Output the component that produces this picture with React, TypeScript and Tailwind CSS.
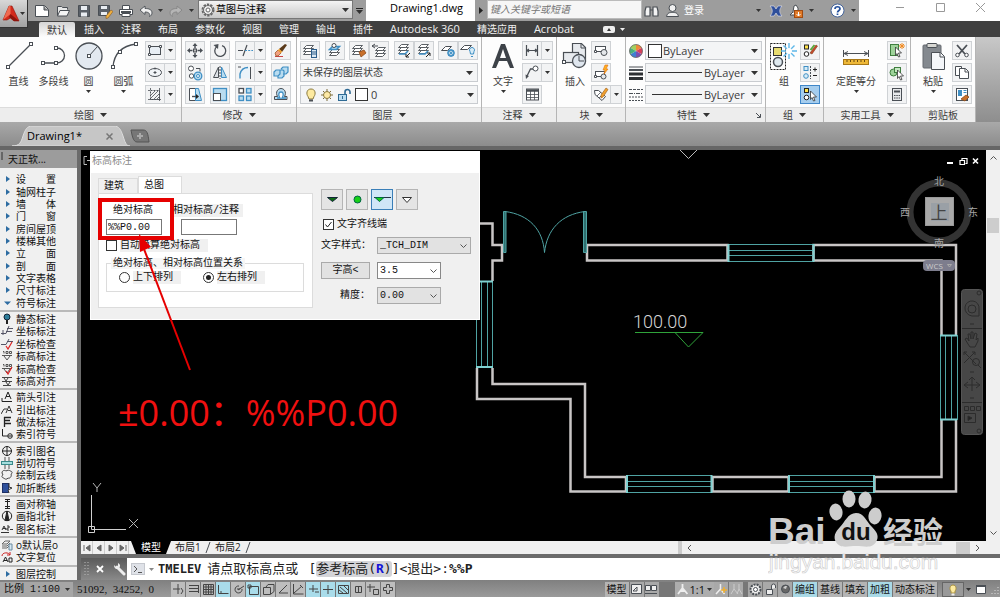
import { clsx } from 'clsx';
import type { ReactNode } from 'react';

const INK = '#4a4f55';
const BLUE = '#3f8fc4';
const PALE = '#b9dcf0';

function Svg({ w, h, className, children }: { w: number; h: number; className?: string; children: ReactNode }) {
    return (
        <svg
            width={w}
            height={h}
            viewBox={`0 0 ${w} ${h}`}
            fill="none"
            stroke={INK}
            aria-hidden="true"
            className={clsx('shrink-0', className)}
        >
            {children}
        </svg>
    );
}

function Caret({ small, className }: { small?: boolean; className?: string }) {
    return (
        <Svg w={small ? 5 : 7} h={small ? 3 : 4} className={className}>
            <path d={small ? 'M0 0h5L2.500 3z' : 'M0 0h7L3.500 4z'} fill="#333" stroke="none" />
        </Svg>
    );
}

/* ---------- ribbon icons, drawn on a 18x17 grid ---------- */

const sheets = (x = 0, y = 0, fill = '#fff') => (
    <g transform={`translate(${x} ${y})`} strokeWidth=".9">
        <path d="M1.500 12.500h7l3-3h-7z" fill={fill} />
        <path d="M1.500 9.500h7l3-3h-7z" fill={fill} />
        <path d="M1.500 6.500h7l3-3h-7z" fill={fill} />
    </g>
);

const icons: Record<string, ReactNode> = {
    rect: (
        <>
            <rect x="3.500" y="4.500" width="11" height="8" fill="#e8eef4" />
            <path d="M2.500 3.500h2v2h-2zM13.500 3.500h2v2h-2zM2.500 11.500h2v2h-2z" fill="#fff" />
        </>
    ),
    ellipse: (
        <>
            <ellipse cx="9" cy="8.500" rx="6.500" ry="4" fill="#f2f5f8" />
            <path d="M9 7v3M7.500 8.500h3M9 3.500v2" />
        </>
    ),
    hatch: (
        <>
            <rect x="4.500" y="4.500" width="9" height="9" strokeDasharray="2 1" />
            <path d="M2 4.500h2M4.500 2v2M13.500 2v13M2 13.500h13M5 9l4-4M5 12l7-7M8 13l5-5M11 13l2-2" strokeWidth=".8" />
        </>
    ),
    move: (
        <>
            <path d="M9 3.500v3M9 11v3M3.500 8.500h3M11.500 8.500h3" strokeWidth="1.500" />
            <path d="M9 1l2.500 3h-5zM9 16l2.500-3h-5zM1 8.500l3-2.500v5zM17 8.500L14 6v5z" fill={INK} stroke="none" />
            <rect x="7.500" y="7" width="3" height="3" fill="#bbb" />
        </>
    ),
    rotate: (
        <>
            <path d="M6 4.500a5.500 5.500 0 1 0 5-.8" strokeWidth="1.300" />
            <path d="M2.500 3l5-1-.5 5z" fill={INK} stroke="none" />
        </>
    ),
    trim: (
        <>
            <path d="M2 8.500h5M11 3L7 14" strokeWidth="1.200" />
            <path d="M9 8.500h8" stroke={BLUE} strokeDasharray="2 1.200" />
        </>
    ),
    erase: (
        <>
            <path d="M3 14.500h8" stroke="#c44" />
            <path d="M3 11l3-3 3 3-3 3H4z" fill="#f1a080" stroke="#9a5a2a" strokeWidth=".8" />
            <path d="M7 7l6-5 2 1-5 7z" fill="#5a3a1a" stroke="none" />
            <path d="M6.500 7.500l3 3" stroke="#f0a030" strokeWidth="2" />
        </>
    ),
    copy: (
        <>
            <circle cx="5" cy="4.500" r="2.500" fill="#fff" />
            <circle cx="5.500" cy="12" r="2.200" fill="#fff" />
            <path d="M10 4.500h4v3" />
            <circle cx="12" cy="12" r="3.800" fill={PALE} stroke={BLUE} strokeWidth="1.300" />
            <circle cx="12" cy="12" r="1.500" fill="#fff" stroke={BLUE} />
        </>
    ),
    mirror: (
        <>
            <path d="M9 2v13" strokeDasharray="2 1" />
            <path d="M7.500 3v10.500h-5z" fill="#dfe3e8" />
            <path d="M10.500 3v10.500h5z" fill={PALE} stroke={BLUE} />
        </>
    ),
    fillet: (
        <>
            <path d="M4 14V9c1-4 4-6 10-6v11z" fill="#eaf3f9" stroke="none" />
            <path d="M4 14.500V10c1-4 4-6.500 8-6.500" stroke={BLUE} strokeWidth="1.400" />
            <path d="M2 3h3M14.500 3v12" />
        </>
    ),
    explode: (
        <path
            d="M2 8l2-2h4v4l-2 2H2zM9 5l2-2h5v5l-2 2h-3M8 6h3l1 1v5l-2 2H6v-2"
            fill={PALE}
            stroke={BLUE}
            strokeWidth="1.200"
        />
    ),
    stretch: (
        <>
            <path d="M3.500 2.500h6v12h-6z" fill="#fff" />
            <path d="M9.500 2.500h3l3 12h-6z" fill={PALE} stroke={BLUE} />
            <path d="M6 10.500h5" strokeWidth="1.400" />
            <path d="M10 8l3 2.500-3 2.500z" fill="#222" stroke="none" />
        </>
    ),
    scale: (
        <>
            <rect x="2.500" y="2.500" width="13" height="12" fill={PALE} stroke={BLUE} strokeWidth="1.300" />
            <rect x="2.500" y="7.500" width="7" height="7" fill="#fff" />
        </>
    ),
    array: (
        <g fill={PALE} stroke={BLUE} strokeWidth="1.300">
            <rect x="3" y="2.500" width="4.500" height="4.500" fill="#fff" stroke={INK} />
            <rect x="10.500" y="2.500" width="4.500" height="4.500" />
            <rect x="3" y="10" width="4.500" height="4.500" />
            <rect x="10.500" y="10" width="4.500" height="4.500" />
        </g>
    ),
    offset: (
        <>
            <path d="M2.500 13.500v-3h3C3 6 6 2.500 9 2.500s6 3.500 3.500 8H15v3z" fill={PALE} stroke={INK} />
            <path d="M5 12h3C6 9 6.500 6 9 6s3 3 1 6h4" fill="#fff" stroke={BLUE} strokeWidth="1.300" />
        </>
    ),
    layerProps: (
        <>
            {sheets(1, 0)}
            <rect x="10.500" y="7.500" width="5" height="8" fill="#dbe9f4" stroke="#2b5d8a" />
            <path d="M11 10h4M11 12h4" stroke="#2b5d8a" />
        </>
    ),
    layerCurrent: (
        <>
            {sheets(2, 1)}
            <path d="M3.500 7.500h7l3-3h-7z" fill={PALE} stroke={BLUE} strokeWidth="1.500" />
            <circle cx="8" cy="3.500" r="2" fill="#fff" />
        </>
    ),
    layerMatch: (
        <>
            {sheets(1, 0)}
            <path d="M9 10l5-2 2 3-5 4z" fill="#c9702a" stroke="#8a4a1a" strokeWidth=".8" />
        </>
    ),
    layerPrev: (
        <>
            {sheets(4, 2)}
            <path d="M2 4h6M2 4l3-2M2 4l3 2" />
        </>
    ),
    layerIso: (
        <>
            {sheets(2, -1)}
            <path d="M4 12h6l3-3" stroke={BLUE} strokeWidth="1.600" />
            <path d="M15 11l-4 4M11 12v3h3" stroke="#222" />
        </>
    ),
    layerUniso: (
        <>
            {sheets(2, -1)}
            <path d="M4 12h6l3-3" stroke={BLUE} strokeWidth="1.600" />
            <path d="M11 15l4-4M12 11h3v3" stroke="#222" />
        </>
    ),
    layerFreeze: (
        <>
            <path d="M2.500 8.500h6l4-4h-6z" fill="#fff" />
            <circle cx="12" cy="11" r="3" stroke={BLUE} fill="#fff" strokeWidth="1.300" />
            <path d="M12 7v8M8 11h8M9 8l6 6M15 8l-6 6" stroke={BLUE} strokeWidth=".8" />
        </>
    ),
    layerOff: (
        <>
            <path d="M1.500 7.500h7l4-4h-7z" fill="#fff" />
            <path d="M11 9.500a2.500 2.500 0 1 1 4 0l-.5 2.500h-3zM12 14.500h2" stroke={BLUE} fill="#d8ecf7" />
        </>
    ),
    dimension: <path d="M3.500 3v11M14.500 3v11M4 8.500h10M4 8.500l2-1.500M4 8.500L6 10M14 8.500L12 7M14 8.500L12 10" strokeWidth="1.200" />,
    leader: (
        <>
            <circle cx="12.500" cy="4.500" r="2.500" fill="#fff" />
            <path d="M10 5H7.500L4 12" strokeWidth="1.300" />
            <path d="M3 15l-.5-4.500L6 12z" fill={INK} stroke="none" />
        </>
    ),
    table: (
        <>
            <rect x="3.500" y="3" width="12" height="11" fill="#fff" />
            <path d="M4 4.500h11" strokeWidth="2.500" />
            <path d="M4 8.500h11M4 11.500h11M7.500 5v9M11.500 5v9" strokeWidth=".8" />
        </>
    ),
    createBlock: (
        <>
            <rect x="3.500" y="4.500" width="10" height="5" fill="#fff" />
            <circle cx="12" cy="10.500" r="3" fill="#e4e7ea" />
            <path d="M2.500 8.500h2v2h-2z" fill="#fff" />
        </>
    ),
    editBlock: (
        <>
            <rect x="3.500" y="7.500" width="9" height="5" fill="#fff" />
            <circle cx="11.500" cy="12.500" r="2.500" fill="#e4e7ea" />
            <path d="M2.500 11.500h2v2h-2z" fill="#fff" />
            <path d="M13 1l-2 5h2l-1 4 4-5h-2l2-4z" fill="#ffb020" stroke="#e07010" strokeWidth=".6" />
        </>
    ),
    attribute: (
        <>
            <path d="M2.500 4.500h4l7 6-3.500 4-7-6z" fill="#fff" />
            <path d="M5 10l4-4M7 12l4-4" strokeWidth=".8" />
            <path d="M9 9l5-7 2 1.500L11 11l-2 1z" fill="#f0a030" stroke="#9a5a10" strokeWidth=".6" />
        </>
    ),
    groupEdit: (
        <>
            <rect x="3.500" y="3" width="4" height="4" fill="#ffe24a" stroke="#222" />
            <circle cx="5.500" cy="12" r="2.300" fill="#fff" stroke="#222" />
            <path d="M9 11l6-8 1.500 1L11 12z" fill="#c9482a" stroke="#7a3a1a" strokeWidth=".6" />
            <path d="M9.500 8l4-5" stroke="#5aa83a" strokeWidth="2" />
        </>
    ),
    groupAdd: (
        <>
            <rect x="3" y="2.500" width="4" height="4" fill="#d8ecf7" stroke={BLUE} />
            <circle cx="5" cy="12" r="2.300" fill="#d8ecf7" stroke={BLUE} />
            <path d="M9.500 2v13" strokeDasharray="2 1" />
            <path d="M12 5.500h4M14 3.500v4M12 11.500h4" stroke="#222" />
        </>
    ),
    groupSelect: (
        <>
            <rect x="3.500" y="2.500" width="4" height="4" fill="#ffe24a" stroke="#222" />
            <circle cx="5.500" cy="11.500" r="2.300" fill="#fff" stroke="#222" />
            <path d="M9.500 5l6 6h-3l1.500 3.500-1.500.5-1.500-3.500-1.500 2z" fill="#fff" stroke="#333" strokeWidth=".8" />
        </>
    ),
    quickSelect: (
        <>
            <rect x="2.500" y="2.500" width="8" height="11" fill="#9ed39a" stroke="#3f7f3f" />
            <path d="M7.500 5l6 6h-3l1.500 3.500-1.500.5L9 11.500l-1.500 2z" fill="#fff" stroke="#333" strokeWidth=".8" />
            <path d="M14 1v6M11 4h6M12 2l4 4M16 2l-4 4" stroke="#f08a20" />
        </>
    ),
    selectAll: (
        <>
            <circle cx="5.500" cy="8.500" r="3.500" fill="#9ed39a" stroke="#3f7f3f" />
            <rect x="6.500" y="3.500" width="6" height="5" fill="#c5e8c2" stroke="#3f7f3f" />
            <path d="M9.500 6l6 6h-3l1.500 3.500-1.500.5-1.500-3.500-1.500 2z" fill="#fff" stroke="#333" strokeWidth=".8" />
        </>
    ),
    calculator: (
        <>
            <rect x="4.500" y="2.500" width="9" height="12" fill="#e8eaec" />
            <path d="M6 5.500h6" strokeWidth="2" />
            <path d="M6 9.500h6M6 12h6" strokeDasharray="1.500 .8" />
        </>
    ),
    cut: (
        <>
            <path d="M4 3l8 9M14 3l-8 9" strokeWidth="1.800" />
            <circle cx="4.500" cy="13" r="1.800" fill="#fff" />
            <circle cx="13.500" cy="13" r="1.800" fill="#fff" />
        </>
    ),
    copyClip: (
        <>
            <path d="M2.500 2.500h6v9h-6z" fill="#fff" />
            <path d="M6.500 4.500h6l3 3v7h-9z" fill="#fff" />
            <path d="M12 5v3h3" />
        </>
    ),
    matchProps: (
        <>
            <rect x="3.500" y="2.500" width="11" height="12" fill="#fff" />
            <path d="M5 4h4v6H5z" fill={BLUE} stroke="none" />
            <path d="M10.500 4.500h3M10.500 6.500h3" stroke={BLUE} />
            <path d="M8 13l5-4 3 2-4 4z" fill="#c9702a" stroke="#8a4a1a" strokeWidth=".8" />
        </>
    ),
};

function Tool({ name, split, active }: { name: string; split?: boolean; active?: boolean }) {
    return (
        <span className="flex h-[19px]">
            <button
                type="button"
                aria-label={name}
                className={clsx(
                    'flex w-5 items-center justify-center border',
                    active ? 'border-[#3f86c8] bg-[#a5cdee]' : 'border-[#cfd2d5] bg-[#f2f3f4]',
                )}
            >
                <Svg w={18} h={17}>
                    {icons[name]}
                </Svg>
            </button>
            {split && (
                <button
                    type="button"
                    aria-label={`${name} options`}
                    className="flex w-[11px] items-center justify-center border border-l-0 border-[#cfd2d5] bg-[#f2f3f4]"
                >
                    <Caret small />
                </button>
            )}
        </span>
    );
}

function BigTool({ label, arrow, width, children }: { label: string; arrow?: boolean; width: string; children: ReactNode }) {
    return (
        <button type="button" className={clsx('flex shrink-0 flex-col items-center', width)}>
            <Svg w={30} h={30}>
                {children}
            </Svg>
            <span className="mt-1 leading-3 whitespace-nowrap">{label}</span>
            {arrow && <Caret small className="mt-[3px]" />}
        </button>
    );
}

function Column({ className, children }: { className?: string; children: ReactNode }) {
    return <div className={clsx('flex flex-col gap-[3px]', className)}>{children}</div>;
}

function Panel({
    title,
    width,
    arrow = true,
    launcher,
    children,
}: {
    title: string;
    width: string;
    arrow?: boolean;
    launcher?: boolean;
    children: ReactNode;
}) {
    return (
        <section className={clsx('flex shrink-0 flex-col border-r border-[#b5b5b5] bg-[#fdfdfd]', width)}>
            <div className="flex h-[70px] justify-between px-[3px] pt-1">{children}</div>
            <h2 className="flex h-[15px] items-center justify-center gap-[6px] border-t border-[#dcdcdc] bg-[#ededed]">
                {launcher && <span className="flex-1" />}
                {title}
                {arrow && <Caret />}
                {launcher && (
                    <span className="flex flex-1 justify-end pr-1">
                        <Svg w={5} h={5}>
                            <path d="M0 0l4 4M4.500 1v3.500H1" />
                        </Svg>
                    </span>
                )}
            </h2>
        </section>
    );
}

const node = (x: number, y: number) => <rect x={x - 1.5} y={y - 1.5} width="3" height="3" fill="#fff" strokeWidth="1" />;

function PropertySelect({ label, children }: { label: string; children: ReactNode }) {
    return (
        <div className="relative flex h-[19px] flex-1 items-center gap-px border border-[#c9ccd0] bg-[#f4f5f6] pl-[2px]">
            {children}
            <select aria-label={label} className="min-w-0 flex-1 appearance-none bg-transparent text-[11px] leading-4 outline-none">
                <option>ByLayer</option>
            </select>
            <Caret className="pointer-events-none absolute right-[3px]" />
        </div>
    );
}

function Ribbon() {
    return (
        <div className="flex h-[85px] shrink-0 bg-linear-to-b from-[#c8c8c8] to-[#8e8e8e] text-[10px] text-[#3c3c3c]">
            <Panel title="绘图" width="w-[182px]">
                <div className="-ml-[2px] flex">
                    <BigTool label="直线" width="w-[35px]">
                        <path d="M4 26L27 3" strokeWidth="1.300" />
                        {node(4, 26)}
                        {node(27, 3)}
                    </BigTool>
                    <BigTool label="多段线" width="w-[35px]">
                        <path d="M4 22h14a7 7 0 0 0 0-15" strokeWidth="1.300" />
                        {node(4, 22)}
                        {node(17, 22)}
                        {node(17, 7)}
                    </BigTool>
                    <BigTool label="圆" arrow width="w-[35px]">
                        <circle cx="15" cy="15" r="13" fill="#e3e9f0" strokeWidth="1.300" />
                        <path d="M15 15l8-9" />
                        {node(15, 15)}
                    </BigTool>
                    <BigTool label="圆弧" arrow width="w-[35px]">
                        <path d="M4 26C5 13 12 5 27 3" strokeWidth="1.300" />
                        {node(4, 26)}
                        {node(11, 11)}
                        {node(27, 3)}
                    </BigTool>
                </div>
                <Column className="mr-[2px]">
                    <Tool name="rect" split />
                    <Tool name="ellipse" split />
                    <Tool name="hatch" split />
                </Column>
            </Panel>

            <Panel title="修改" width="w-[115px]">
                <Column>
                    <Tool name="move" />
                    <Tool name="copy" />
                    <Tool name="stretch" />
                </Column>
                <Column>
                    <Tool name="rotate" />
                    <Tool name="mirror" />
                    <Tool name="scale" />
                </Column>
                <Column>
                    <Tool name="trim" split />
                    <Tool name="fillet" split />
                    <Tool name="array" split />
                </Column>
                <Column className="mr-[2px]">
                    <Tool name="erase" />
                    <Tool name="explode" />
                    <Tool name="offset" />
                </Column>
            </Panel>

            <Panel title="图层" width="w-[185px]">
                <Column className="flex-1">
                    <div className="flex justify-between">
                        <Tool name="layerProps" />
                        <Tool name="layerCurrent" />
                        <span className="flex">
                            <Tool name="layerMatch" />
                            <Tool name="layerPrev" />
                        </span>
                        <span className="flex">
                            <Tool name="layerIso" />
                            <Tool name="layerUniso" />
                        </span>
                        <span className="flex">
                            <Tool name="layerFreeze" />
                            <Tool name="layerOff" />
                        </span>
                    </div>
                    <div className="relative flex h-[19px] items-center border border-[#c9ccd0] bg-[#f4f5f6]">
                        <select aria-label="图层状态" className="w-full appearance-none bg-transparent pl-[2px] outline-none">
                            <option>未保存的图层状态</option>
                        </select>
                        <Caret className="pointer-events-none absolute right-1" />
                    </div>
                    <div className="relative flex h-[19px] items-center gap-[3px] border border-[#c9ccd0] bg-[#f4f5f6] pl-1">
                        <Svg w={12} h={15}>
                            <path d="M3 9.500C1 7 1.500 2 6 2s5 5 3 7.500l-1 2.500H4z" fill="#fdeaa0" stroke="#8a7a40" />
                            <path d="M4 13.500h4" strokeWidth="2" />
                        </Svg>
                        <Svg w={14} h={14}>
                            <path d="M7 1v12M1 7h12M3 3l8 8M11 3l-8 8" stroke="#7a6a3a" />
                            <circle cx="7" cy="7" r="3.500" fill="#fde9a6" stroke="#8a7a40" />
                        </Svg>
                        <Svg w={15} h={14}>
                            <path d="M8 7V4a2.500 2.500 0 0 1 5 0v2" stroke="#2f6a94" strokeWidth="1.600" />
                            <rect x="1.500" y="6.500" width="8" height="6" fill={PALE} stroke="#2f6a94" />
                            <path d="M5.500 8v3" stroke="#2f6a94" />
                        </Svg>
                        <span className="h-[13px] w-[13px] border border-[#333] bg-white" />
                        <select aria-label="图层" className="flex-1 appearance-none bg-transparent text-[11px] leading-4 outline-none">
                            <option>0</option>
                        </select>
                        <Caret className="pointer-events-none absolute right-[3px]" />
                    </div>
                </Column>
            </Panel>

            <Panel title="注释" width="w-[75px]">
                <BigTool label="文字" arrow width="w-[36px]">
                    <path
                        d="M4 27L13 3h4l9 24h-4l-3-7h-8l-3 7zM12 17h6L15 8z"
                        fill="#3d4248"
                        stroke="none"
                        fillRule="evenodd"
                    />
                </BigTool>
                <Column>
                    <Tool name="dimension" split />
                    <Tool name="leader" split />
                    <Tool name="table" />
                </Column>
            </Panel>

            <Panel title="块" width="w-[69px]">
                <BigTool label="插入" width="w-[30px]">
                    <path d="M12.500 2.500h9l4 4v14h-13z" fill="#e7eaee" strokeWidth="1.200" />
                    <path d="M21 3v4h4" />
                    <rect x="3.500" y="11.500" width="15" height="10" fill="#e7eaee" strokeWidth="1.200" />
                    <circle cx="19" cy="20" r="6.500" fill="#dfe6ee" strokeWidth="1.300" />
                    <path d="M19 15v5h5" />
                    {node(4, 21)}
                </BigTool>
                <Column>
                    <Tool name="createBlock" />
                    <Tool name="editBlock" />
                    <Tool name="attribute" split />
                </Column>
            </Panel>

            <Panel title="特性" width="w-[140px]" launcher>
                <Column className="flex-1">
                    <div className="flex items-center gap-[2px]">
                        <Svg w={14} h={14}>
                            <path d="M7 7L1.400 3.800A6.500 6.500 0 0 1 7 .5z" fill="#a3cf5f" stroke="none" />
                            <path d="M7 7V.5a6.500 6.500 0 0 1 5.600 3.300z" fill="#ef8a3a" stroke="none" />
                            <path d="M7 7l5.600-3.200a6.500 6.500 0 0 1 0 6.400z" fill="#d9405a" stroke="none" />
                            <path d="M7 7l5.600 3.200A6.500 6.500 0 0 1 7 13.500z" fill="#7a4fb0" stroke="none" />
                            <path d="M7 7v6.500a6.500 6.500 0 0 1-5.600-3.300z" fill="#3f7fd0" stroke="none" />
                            <path d="M7 7l-5.600 3.200a6.500 6.500 0 0 1 0-6.400z" fill="#49b07a" stroke="none" />
                            <circle cx="7" cy="7" r="6.500" stroke="#666" strokeWidth=".8" />
                        </Svg>
                        <PropertySelect label="颜色">
                            <span className="h-[14px] w-[14px] border border-[#333] bg-white" />
                        </PropertySelect>
                    </div>
                    <div className="flex items-center gap-[2px]">
                        <Svg w={14} h={14}>
                            <path d="M0 1h14" strokeWidth="1" />
                            <path d="M0 4h14" strokeWidth="2" />
                            <path d="M0 8h14M0 12.500h14" strokeWidth="3" stroke="#2c2f33" />
                        </Svg>
                        <PropertySelect label="线宽">
                            <span className="mr-px h-px w-[54px] bg-[#333]" />
                        </PropertySelect>
                    </div>
                    <div className="flex items-center gap-[2px]">
                        <Svg w={14} h={14}>
                            <path d="M0 1.500h14" strokeDasharray="3 1" />
                            <path d="M0 5.500h14" strokeDasharray="4 1 1 1" />
                            <path d="M0 9h14M0 12.500h14" strokeDasharray="2 1" />
                        </Svg>
                        <PropertySelect label="线型">
                            <span className="mr-px ml-1 h-px w-[50px] bg-[#333]" />
                        </PropertySelect>
                    </div>
                </Column>
            </Panel>

            <Panel title="组" width="w-[58px]">
                <BigTool label="组" width="w-[30px]">
                    <rect x="1.500" y="2.500" width="15" height="26" stroke="#222" strokeDasharray="2 1" />
                    <rect x="4.500" y="6.500" width="8" height="8" fill="#e8dc70" stroke="#333" />
                    <circle cx="9" cy="21" r="4.500" fill="#dfe9ef" strokeWidth="1.500" />
                    <path d="M20 2v16M12 10h16M14.500 4.500l11 11M25.500 4.500l-11 11" stroke="#5db7e8" strokeWidth="1.400" />
                    <circle cx="20" cy="10" r="3" fill="#fff" stroke="none" />
                </BigTool>
                <Column>
                    <Tool name="groupEdit" />
                    <Tool name="groupAdd" />
                    <Tool name="groupSelect" active />
                </Column>
            </Panel>

            <Panel title="实用工具" width="w-[87px]">
                <BigTool label="定距等分" arrow width="w-[58px]">
                    <path d="M2.500 9v7M27.500 9v7M3 12.500h24M3 12.500l4-2M3 12.500l4 2M27 12.500l-4-2M27 12.500l-4 2" />
                    <rect x="2.500" y="18.500" width="25" height="5" fill="#eeb838" stroke="#a87818" />
                    <path d="M6 19v2M9.500 19v2M13 19v2M16.500 19v2M20 19v2M23.500 19v2" stroke="#6a4a10" />
                </BigTool>
                <Column>
                    <Tool name="quickSelect" />
                    <Tool name="selectAll" />
                    <Tool name="calculator" />
                </Column>
            </Panel>

            <Panel title="剪贴板" width="w-[65px]" arrow={false}>
                <BigTool label="粘贴" arrow width="w-[38px]">
                    <rect x="5" y="4" width="18" height="23" rx="1" fill="#84898f" stroke="#666a70" />
                    <rect x="9" y="2.500" width="10" height="4" rx="1" fill="#d8d8d4" />
                    <path d="M13.500 11.500h9l4 4v13h-13z" fill="#f4f6f9" />
                    <path d="M22 12v4h4" />
                </BigTool>
                <Column>
                    <Tool name="cut" />
                    <Tool name="copyClip" />
                    <Tool name="matchProps" />
                </Column>
            </Panel>
        </div>
    );
}

/* ---------- title bar ---------- */

const quickAccess: [string, ReactNode][] = [
    ['新建', <path key="p" d="M1.500 2.500h9l4 4v7h-13zM10 3v4h4" fill="#fff" />],
    [
        '打开',
        <g key="p">
            <path d="M2.500 12.500v-9h4l1 1h5v2" fill="#e8e8e8" />
            <path d="M2.500 13L5 7.500h9.500L12 13z" fill="#f5f5f5" />
        </g>,
    ],
    [
        '保存',
        <g key="p">
            <path d="M2.500 2.500h11v11h-11z" fill="#5a6068" />
            <path d="M5 3h6v4H5zM5 9.500h6v4H5z" fill="#e9edf2" stroke="none" />
        </g>,
    ],
    [
        '另存为',
        <g key="p">
            <path d="M1.500 2.500h11v10h-11z" fill="#5a6068" />
            <path d="M4 3h6v3H4zM4 9h6v3H4z" fill="#e9edf2" stroke="none" />
            <path d="M9 13l5-6 2 1.500L11 15l-2 .5z" fill="#f0b040" stroke="#8a5a20" strokeWidth=".6" />
        </g>,
    ],
    [
        '打印',
        <g key="p">
            <path d="M4.500 6V2.500h7V6M1.500 6.500h13v5h-13z" fill="#fff" />
            <path d="M3 8h10v2H3z" fill="#4a4f55" stroke="none" />
            <path d="M4 10.500h8v3H4z" fill="#fff" />
        </g>,
    ],
];

function TitleBar() {
    return (
        <div className="flex h-[21px] bg-[#9d9d9d] text-[10px]">
            <div className="ml-[6px] flex items-center gap-[5px] pr-1">
                {quickAccess.map(([label, glyph]) => (
                    <button key={label} type="button" aria-label={label}>
                        <Svg w={16} h={16}>
                            {glyph}
                        </Svg>
                    </button>
                ))}
                <button type="button" aria-label="放弃">
                    <Svg w={14} h={14}>
                        <path d="M1 6l5-4v2.500c4 0 7 1 7 4.500 0 1.500-1 3-2.500 3.500 1-3-1-4.500-4.500-4.500v2.500z" fill="#f0f0f0" strokeWidth=".9" />
                    </Svg>
                </button>
                <Caret small />
                <button type="button" aria-label="重做" className="ml-px">
                    <Svg w={14} h={14}>
                        <path d="M13 6L8 2v2.500C4 4.500 1 5.500 1 9c0 1.500 1 3 2.500 3.500C2.500 9.500 4.500 8 8 8v2.500z" fill="#b5b5b5" stroke="#888" />
                    </Svg>
                </button>
                <Caret small className="ml-px" />
            </div>
            <div className="relative flex h-[19px] w-[155px] items-center gap-px border border-[#777] bg-linear-to-b from-[#f4f4f4] to-[#c9c9c9] pl-[2px]">
                <Svg w={14} h={14}>
                    <circle cx="7" cy="7" r="5.500" strokeWidth="2" strokeDasharray="2.300 1.150" stroke="#666" />
                    <circle cx="7" cy="7" r="4.500" fill="#eee" stroke="#666" />
                    <circle cx="7" cy="7" r="2" fill="#fff" stroke="#666" />
                </Svg>
                <select aria-label="工作空间" className="min-w-0 flex-1 appearance-none bg-transparent text-black outline-none">
                    <option>草图与注释</option>
                </select>
                <Caret className="pointer-events-none absolute right-[3px]" />
            </div>
            <button type="button" aria-label="自定义" className="flex w-[13px] flex-col items-center justify-center gap-px">
                <span className="h-px w-[7px] bg-[#222]" />
                <Caret />
            </button>
            <div className="flex w-[109px] items-center justify-center bg-white pl-3 text-[11px] text-black">
                <span className="pb-1">Drawing1.dwg</span>
            </div>
            <button type="button" aria-label="展开搜索" className="flex w-3 items-center justify-center">
                <Svg w={4} h={7}>
                    <path d="M0 0l4 3.500L0 7z" fill="#222" stroke="none" />
                </Svg>
            </button>
            <input
                aria-label="搜索"
                placeholder="键入关键字或短语"
                className="h-[19px] w-[155px] border border-[#bbb] bg-[#f6f6f6] px-[2px] pb-px italic outline-none placeholder:text-[#777]"
            />
            <div className="flex flex-1 items-center pl-[2px]">
                <Svg w={15} h={14}>
                    <path d="M2 3h4v9H1V7zM13 3H9v9h5V7zM6 6h3" fill="#f3f3f3" strokeWidth="1.200" />
                </Svg>
                <Svg w={15} h={16} className="ml-[6px]">
                    <circle cx="7.500" cy="5" r="3.500" fill="#f0f0f0" />
                    <path d="M1.500 13.500c1-4 3-4 6-4s5 0 6 4z" fill="#f0f0f0" />
                </Svg>
                <a href="#login" className="ml-1 text-white">
                    登录
                </a>
                <span className="flex-1" />
                <Caret small className="mr-2" />
                <Svg w={14} h={14}>
                    <path d="M1 2h4l2 3 2-3h4c-3 3-3 7 0 10H9L7 9l-2 3H1c3-3 3-7 0-10z" fill="#2f4f9a" stroke="#e8e8f4" strokeWidth=".6" />
                </Svg>
                <Svg w={16} h={16} className="mx-[5px]">
                    <path d="M5 9l1-6 2-1 2 3v3M5 9l-3 3h5" fill="#fff" />
                    <rect x="6.500" y="7.500" width="8" height="7" fill="#e07a28" stroke="#a04a10" />
                    <path d="M10.500 9v4M8.500 11l2 2 2-2" stroke="#fff" />
                </Svg>
                <Caret small className="mr-4" />
                <Svg w={15} h={15}>
                    <circle cx="7.500" cy="7.500" r="6.500" fill="#fff" stroke="#45659c" />
                    <path d="M5 6c0-3 5-3 5 0 0 1.500-2.500 1.500-2.500 3.500M7.500 10.500v1.500" stroke="#24509c" strokeWidth="1.700" />
                </Svg>
                <Caret small className="mr-[3px] ml-[6px]" />
            </div>
            <div className="flex w-[141px] items-center justify-between bg-white pr-[15px] pb-[7px] pl-[37px]">
                <button type="button" aria-label="最小化">
                    <Svg w={9} h={9}>
                        <path d="M0 4.500h8" stroke="#999" />
                    </Svg>
                </button>
                <button type="button" aria-label="最大化">
                    <Svg w={9} h={9}>
                        <path d="M.5.5h8v8h-8z" stroke="#999" />
                    </Svg>
                </button>
                <button type="button" aria-label="关闭">
                    <Svg w={9} h={9}>
                        <path d="M0 0l9 9M9 0L0 9" stroke="#999" />
                    </Svg>
                </button>
            </div>
        </div>
    );
}

const menuTabs = ['默认', '插入', '注释', '布局', '参数化', '视图', '管理', '输出', '插件', 'Autodesk 360', '精选应用', 'Acrobat'];

function Header() {
    return (
        <header className="flex shrink-0 bg-[#404040]">
            <button
                type="button"
                aria-label="应用程序菜单"
                className="flex h-7 w-7 shrink-0 items-center border-r border-b border-[#333] bg-linear-to-b from-[#d8d8d8] to-[#a2a2a2] pl-[2px]"
            >
                <Svg w={18} h={18}>
                    <path d="M7 1h3l7 15h-5l-3.500-3L5 15H1z" fill="#d32a1c" stroke="#8d140c" strokeWidth=".6" />
                    <path d="M7 1h1.500v8L1 15z" fill="#ef6a50" stroke="none" />
                    <path d="M8.500 9l8.500 7h-5l-5-4z" fill="#8d140c" stroke="none" />
                </Svg>
                <Caret small />
            </button>
            <div className="min-w-0 flex-1">
                <TitleBar />
                <nav className="flex h-4 items-stretch gap-px pl-[11px] text-[10px] leading-4 text-[#f0f0f0]">
                    {menuTabs.map((tab, i) => (
                        <button
                            key={tab}
                            type="button"
                            className={clsx(
                                'px-2 whitespace-nowrap',
                                i === 0 && 'mt-px rounded-t-[2px] bg-linear-to-b from-[#d5d5d5] to-[#fdfdfd] text-[#333]',
                                /^[A-Z]/.test(tab) && 'text-[11px]',
                            )}
                        >
                            {tab}
                        </button>
                    ))}
                    <button type="button" aria-label="最小化功能区" className="ml-5 flex items-center gap-[5px]">
                        <Svg w={12} h={7}>
                            <rect width="12" height="7" rx="2" fill="#eee" stroke="none" />
                            <path d="M4 5l2-3 2 3z" fill="#333" stroke="none" />
                        </Svg>
                        <Svg w={5} h={3}>
                            <path d="M0 0h5L2.500 3z" fill="#eee" stroke="none" />
                        </Svg>
                    </button>
                </nav>
            </div>
        </header>
    );
}

function DocumentTabs() {
    return (
        <div className="flex h-7 shrink-0 items-start border-b-4 border-[#666] bg-linear-to-b from-[#a9a9a9] to-[#8c8c8c] pt-1 pl-3">
            <button type="button" className="relative h-5 w-[118px] text-left text-[11px] leading-5 text-black">
                <Svg w={118} h={20} className="absolute inset-0">
                    <path d="M0 20c8 0 9-4 11-10S15 0 20 0h82c5 0 7 4 9 10s3 10 7 10z" fill="#c6c6c6" stroke="#ddd" />
                </Svg>
                <span className="relative pl-[15px]">Drawing1*</span>
                <Svg w={7} h={7} className="absolute top-[7px] right-[17px]">
                    <path d="M.5.5l6 6M6.500.5l-6 6" stroke="#777" strokeWidth="1.500" />
                </Svg>
            </button>
            <button type="button" aria-label="新图形">
                <Svg w={20} h={16} className="mt-[3px]">
                    <path d="M1 1h12c4 0 5 3 6 12H7C3 13 2 6 1 1z" fill="#777" stroke="#555" />
                    <path d="M10 4v6M7 7h6" stroke="#aaa" strokeWidth="2" />
                </Svg>
            </button>
        </div>
    );
}

/* ---------- TArch side menu ---------- */

const branch = <path d="M5 3l4 3-4 3z" fill="#2d6ca2" stroke="none" />;
const level = (
    <path d="M1 5.500h10M2 1.500h1v2M5 1.500h2v2H5zM8.500 1.500h2v2h-2zM3 6l3 4 3-4" stroke="#444" strokeWidth=".9" />
);
const check = <path d="M5 8l2 3 4-7" stroke="#d22" strokeWidth="1.200" />;

type MenuItem = [label: string, glyph: ReactNode];

const menuGroups: { grow: string; items: MenuItem[] }[] = [
    {
        grow: 'flex-[11]',
        items: [
            ['设　　置', branch],
            ['轴网柱子', branch],
            ['墙　　体', branch],
            ['门　　窗', branch],
            ['房间屋顶', branch],
            ['楼梯其他', branch],
            ['立　　面', branch],
            ['剖　　面', branch],
            ['文字表格', branch],
            ['尺寸标注', branch],
            ['符号标注', <path key="d" d="M3 4.500h7L6.500 8z" fill="#2d6ca2" stroke="none" />],
        ],
    },
    {
        grow: 'flex-[6]',
        items: [
            [
                '静态标注',
                <g key="g">
                    <circle cx="6" cy="4" r="3" fill="#2d7d9a" stroke="#123" />
                    <path d="M6 7v4" strokeWidth="2" stroke="#222" />
                </g>,
            ],
            ['坐标标注', <path key="g" d="M0 8.500h5L8 1M6 3.500h6M5 6.500h6M2 5v5" stroke="#556" />],
            [
                '坐标检查',
                <g key="g">
                    <path d="M0 6.500h5L8 1M6 3.500h6" stroke="#556" />
                    {check}
                </g>,
            ],
            ['标高标注', level],
            [
                '标高检查',
                <g key="g">
                    {level}
                    {check}
                </g>,
            ],
            ['标高对齐', <path key="g" d="M1 2.500h10M1 6.500h10M2 10.500h8M3 3l2 3 2-3M5 7l2 3 2-3" stroke="#444" />],
        ],
    },
    {
        grow: 'flex-[4]',
        items: [
            ['箭头引注', <path key="g" d="M1 7v3.500h10M4 8l3-7 3 7M5 5.500h4" stroke="#222" />],
            ['引出标注', <path key="g" d="M0 10l3-5h3M5 9l3-7 3 7M7 6.500h3" stroke="#333" />],
            ['做法标注', <path key="g" d="M3.500 1v10M3 1.500h7M3 4.500h6M3 7.500h7" stroke="#222" strokeWidth="1.300" />],
            [
                '索引符号',
                <g key="g" stroke="#222">
                    <path d="M1.500 1v7h5" />
                    <circle cx="9" cy="8" r="2.300" />
                    <path d="M7 8h4" />
                </g>,
            ],
        ],
    },
    {
        grow: 'flex-[4]',
        items: [
            [
                '索引图名',
                <g key="g" stroke="#222">
                    <circle cx="6" cy="6" r="4.500" />
                    <path d="M1 6h10M6 1v10" />
                </g>,
            ],
            [
                '剖切符号',
                <g key="g">
                    <path d="M4 0v12M8 0v12" stroke="#555" />
                    <rect x=".5" y="4.500" width="11" height="3" fill="#a6dede" stroke="#3a8a8a" />
                </g>,
            ],
            ['绘制云线', <path key="g" d="M1 4c0-3 3-3 4-2 1-1 4-1 4 0 2 0 3 2 1 3 1 2-1 5-3 4-1 2-4 1-4 0-2 0-3-2-1-3z" stroke="#444" />],
            [
                '加折断线',
                <g key="g">
                    <rect x="1.500" y="1.500" width="6" height="9" fill="#2d4f9a" stroke="#1c2f66" />
                    <path d="M8 1v4l3 1-4 2 1 3" fill="#fff" stroke="#333" />
                </g>,
            ],
        ],
    },
    {
        grow: 'flex-[3]',
        items: [
            ['画对称轴', <path key="g" d="M6.500 1v10M4 1.500h5M4 3.500h5M4 8.500h5M4 10.500h5" stroke="#222" />],
            [
                '画指北针',
                <g key="g" stroke="#222">
                    <circle cx="6" cy="6" r="4.700" />
                    <path d="M6 1l2 9.500H4z" fill="#222" />
                </g>,
            ],
            ['图名标注', <path key="g" d="M0 9.500h8M1 7l2-4 2 4M2 5.500h3M6 3h2v2H6v2h2M9 6.500h3" stroke="#333" />],
        ],
    },
    {
        grow: 'flex-[2]',
        items: [
            [
                'o默认层o',
                <g key="g">
                    <path d="M1 9h5l3-3M1 7h5l3-3M1 5h5l3-3H4z" fill="#eee" stroke="#666" />
                    <path d="M8 5h3v6H8z" fill="#d5e8f3" stroke="#6a8aa0" />
                </g>,
            ],
            [
                '文字复位',
                <g key="g">
                    <path d="M1 5c0-4 7-4 8-1M9 1v3H6" stroke="#c22" />
                    <path d="M2 11l2.500-5L7 11M3 9.500h3M8 7h3v4H8z" stroke="#222" />
                </g>,
            ],
        ],
    },
    { grow: 'flex-[1]', items: [['图层控制', branch]] },
];

function SideMenu() {
    return (
        <aside className="flex w-[77px] shrink-0 flex-col bg-[#f0f0f0] text-[10px] text-[#111]">
            <h1 className="flex h-[18px] shrink-0 items-center gap-[5px] bg-[#9c9c9c]">
                <span className="mb-[6px] ml-px h-2 w-[2px] bg-[#666]" />
                天正软...
            </h1>
            <div className="flex flex-1 flex-col pt-[5px]">
                {menuGroups.map(({ grow, items }, i) => (
                    <ul key={items[0][0]} className={clsx('flex flex-col', grow, i > 0 && 'mt-px border-t-2 border-[#b9b9b9] pt-px')}>
                        {items.map(([label, glyph]) => (
                            <li key={label} className="flex flex-1 items-center">
                                <button type="button" className="flex items-center gap-[3px] pl-px leading-3 whitespace-nowrap">
                                    <Svg w={12} h={12}>
                                        {glyph}
                                    </Svg>
                                    {label}
                                </button>
                            </li>
                        ))}
                    </ul>
                ))}
            </div>
        </aside>
    );
}

/* ---------- drawing area ---------- */

function FloorPlan() {
    return (
        <svg className="absolute inset-0 h-full w-full" fill="none" aria-hidden="true">
            <g transform="translate(-81 -150)">
                <g stroke="#c9c6c6" strokeWidth="2.500">
                    <path d="M478 223.500h14.500V245h9.500v15.500h-9.500V281" />
                    <path d="M477 368v31h93.500v92.500H626V477h-41v-93h-92.500v-16" />
                    <path d="M587 245h140.500v15.500H587z" />
                    <path d="M712.500 477h76v14.500h-76z" />
                    <path d="M941.500 335v-74.500h-128V245H956v90" />
                    <path d="M941.500 420v57h-67v14.500H956V420" />
                </g>
                <g stroke="#4fa3a3">
                    <path d="M476.500 281v86M481.500 281v86M487.500 281v86M492.500 281v86" />
                    <path d="M728 244.500h85M728 250.500h85M728 255.500h85M728 261.500h85" />
                    <path d="M627 475.500h85M627 481.500h85M627 486.500h85M627 492.500h85" />
                    <path d="M789 475.500h85M789 481.500h85M789 486.500h85M789 492.500h85" />
                    <path d="M940.500 335v85M945.500 335v85M951.500 335v85M957.500 335v85" />
                    <path d="M503.500 211.500h2.500v41h-2.500zM583.500 211.500h3v41h-3z" fill="#2f6f6f" />
                    <path d="M505 211.500c24 3 38 18 39.500 41M585 211.500c-24 3-38 18-40.500 41" />
                </g>
                <path
                    d="M476 281.500h17M476 367h17M728.500 244v18M813.500 244v18M627 475v18M711.500 475v18M789 475v18M874 475v18M940 335.500h17M940 419.500h17"
                    stroke="#7fd0d0"
                    strokeWidth="2"
                />
                <path d="M635 332.500h68L688.500 347 675 332.500" stroke="#2fa33a" />
                <path d="M680 150l8.500 8.500L697 150" stroke="#bbb" />
                <text
                    x="633"
                    y="328"
                    fill="#d5d5d5"
                    fontSize="18"
                    fontWeight="300"
                    className="[font-family:'Roboto',sans-serif]"
                >
                    100.00
                </text>
                <path d="M91.500 495v34.500H126M88.500 526.500h6v6h-6z" stroke="#d0d0d0" />
                <path d="M93 483l4 5 4-5M97 488v4M129 519l9 9M138 519l-9 9" stroke="#b5b5b5" />
                <path d="M87 156.500h-3v8h3M87 160.500h4" stroke="#bbb" />
            </g>
        </svg>
    );
}

function ViewCube() {
    return (
        <div className="absolute top-[25px] right-[6px] h-[75px] w-[82px] text-[#a5a5a5]">
            <Svg w={82} h={75} className="absolute inset-0">
                <circle cx="41" cy="37" r="29" stroke="#333" strokeWidth="7" />
                <rect x="27.500" y="22.500" width="28" height="28" fill="#a9a9a9" stroke="#999" />
                <rect x="33" y="28" width="18" height="18" fill="#9aa0a6" stroke="none" />
            </Svg>
            <div className="relative grid h-full grid-cols-3 grid-rows-3 px-[2px] text-center text-[10px] leading-[13px]">
                <span className="col-start-2 row-start-1">北</span>
                <span className="col-start-1 row-start-2 self-center justify-self-start">西</span>
                <span className="col-start-2 row-start-2 self-center text-[17px] text-[#444]">上</span>
                <span className="col-start-3 row-start-2 self-center justify-self-end">东</span>
                <span className="col-start-2 row-start-3 self-end">南</span>
            </div>
        </div>
    );
}

function NavigationBar() {
    return (
        <Svg w={22} h={146} className="absolute top-[139px] right-[3px]">
            <rect x=".5" y=".5" width="21" height="145" rx="3" fill="#474747" stroke="#555" />
            <g stroke="#2c2c2c">
                <circle cx="18" cy="4" r="2" />
                <path d="M4 18a7 7 0 1 1 14 2v7H11a8 8 0 0 1-7-9z" />
                <circle cx="11" cy="20" r="4" />
                <path d="M1 39.500h20M1 113.500h20M9 35h4M9 83h4M9 109h4" />
                <path d="M7 55l-3-5 2-1 2 3-1-7h2l1 5V43h2v7l2-6 2 1-1 6 2-2v3l-3 6H9z" />
                <path d="M3 63l12 12M14 63L3 74M3 66v-3h3M11 63h3v3" />
                <circle cx="15" cy="73" r="3.500" />
                <path d="M17 76l3 3M11 88v14M4 96h14M8 91l3-3 3 3M7 93l-4 3 4 3M15 93l4 3-4 3" />
                <path d="M3.500 117.500h4v4h-4zM9.500 117.500h4v4h-4zM15.500 117.500h4v4h-4zM3.500 124.500h11v9h-11z" />
                <path d="M7 127l4 2-4 2.500z" fill="#222" />
                <circle cx="18" cy="142" r="2" />
            </g>
        </Svg>
    );
}

function Chevron({ className }: { className?: string }) {
    return (
        <Svg w={7} h={4} className={clsx('pointer-events-none', className)}>
            <path d="M.5.5l3 3 3-3" stroke="#555" />
        </Svg>
    );
}

function DialogSelect({ id, value, width, white }: { id: string; value: string; width: string; white?: boolean }) {
    return (
        <span className={clsx('relative flex h-[17px] items-center border', width, white ? 'border-[#888] bg-white' : 'border-[#aaa] bg-[#e2e2e2]')}>
            <select id={id} className="w-full appearance-none bg-transparent pl-[2px] outline-none">
                <option>{value}</option>
            </select>
            <Chevron className="absolute right-[3px]" />
        </span>
    );
}

const markStyles: [string, ReactNode][] = [
    ['实心三角', <path key="m" d="M5.500 7.500h10l-5 4z" fill="#0b6b12" stroke="#123" />],
    ['圆点', <circle key="m" cx="10.500" cy="9.500" r="3.500" fill="#18d018" stroke="#064" />],
    [
        '普通标高',
        <g key="m">
            <path d="M2 7.500h17" stroke="#234" />
            <path d="M3 7.500h9l-4.500 4z" fill="#18d018" stroke="#064" />
        </g>,
    ],
    ['空心三角', <path key="m" d="M5.500 7.500h9l-4.500 5z" fill="#fff" stroke="#333" />],
];

function ElevationDialog() {
    return (
        <form className="absolute top-px left-[9px] flex h-[169px] w-[390px] flex-col border border-white bg-[#f0f0f0] text-[10px] text-[#111] [font-family:'Liberation_Mono','Noto_Sans_CJK_SC',monospace]">
            <h2 className="h-[21px] shrink-0 bg-white pl-px leading-5 text-[#8a8a8a]">标高标注</h2>
            <div className="flex flex-1 items-start pl-[7px]">
                <div className="mt-1 w-[215px]">
                    <div className="flex h-4 items-end">
                        <button type="button" className="h-[15px] w-10 border border-b-0 border-[#dcdcdc] pr-2">
                            建筑
                        </button>
                        <button type="button" className="relative h-[17px] w-11 border border-b-0 border-[#dcdcdc] bg-white pr-3">
                            总图
                        </button>
                    </div>
                    <div className="h-[115px] border border-[#dcdcdc] bg-white pt-[10px] pl-[7px]">
                        <div className="flex gap-[19px]">
                            <label className="flex w-14 flex-col gap-[2px]">
                                <span className="pl-[7px] leading-[13px] whitespace-nowrap">绝对标高</span>
                                <input defaultValue="%%P0.00" className="h-4 w-full border border-[#777] pl-px outline-none" />
                            </label>
                            <label className="flex w-14 flex-col gap-[2px]">
                                <span className="-ml-2 self-start bg-[#f0f0f0] pr-1 leading-[13px] whitespace-nowrap">相对标高/注释</span>
                                <input className="h-4 w-full border border-[#777] outline-none" />
                            </label>
                        </div>
                        <label className="mt-1 flex h-[13px] items-center gap-[3px]">
                            <input type="checkbox" className="h-[11px] w-[11px] appearance-none border border-[#333] bg-white" />
                            <span className="bg-[#f0f0f0] pr-2 leading-[13px]">自动换算绝对标高</span>
                        </label>
                        <fieldset className="mt-[6px] mr-2 h-[34px] border border-[#dcdcdc] pl-3">
                            <legend className="-ml-2 bg-[#f6f6f6] px-[2px] leading-[11px]">绝对标高、相对标高位置关系</legend>
                            <div className="flex gap-[22px] pt-[2px]">
                                {['上下排列', '左右排列'].map((label, i) => (
                                    <label key={label} className="flex items-center gap-[3px]">
                                        <input
                                            type="radio"
                                            name="order"
                                            defaultChecked={i === 1}
                                            className="h-[11px] w-[11px] appearance-none rounded-full border border-[#333] bg-white p-[2px] checked:bg-[#222] checked:bg-clip-content"
                                        />
                                        <span className="bg-[#f0f0f0] pr-2 leading-[13px]">{label}</span>
                                    </label>
                                ))}
                            </div>
                        </fieldset>
                    </div>
                </div>
                <div className="ml-2 flex flex-col pt-4">
                    <div className="flex gap-[3px]">
                        {markStyles.map(([label, glyph], i) => (
                            <button
                                key={label}
                                type="button"
                                aria-label={label}
                                className={clsx('border', i === 2 ? 'border-[#3a7fb8] bg-[#cfe6f7]' : 'border-[#b5b5b5] bg-[#e4e4e4]')}
                            >
                                <Svg w={20} h={19}>
                                    {glyph}
                                </Svg>
                            </button>
                        ))}
                    </div>
                    <label className="mt-2 ml-[2px] flex items-center gap-[3px] leading-[13px]">
                        <span className="relative flex">
                            <input type="checkbox" defaultChecked className="h-[11px] w-[11px] appearance-none border border-[#333] bg-white" />
                            <Svg w={11} h={11} className="pointer-events-none absolute inset-0">
                                <path d="M2.500 5.500l2 2.500 4-5" stroke="#222" />
                            </Svg>
                        </span>
                        文字齐线端
                    </label>
                    <div className="mt-[6px] grid grid-cols-[49px_auto] items-center gap-x-[7px] gap-y-2">
                        <label htmlFor="text-style" className="whitespace-nowrap">
                            文字样式：
                        </label>
                        <DialogSelect id="text-style" value="_TCH_DIM" width="w-[94px]" />
                        <button type="button" className="h-[17px] border border-[#aaa] bg-[#e2e2e2]">
                            字高&lt;
                        </button>
                        <DialogSelect id="text-height" value="3.5" width="w-16" white />
                        <label htmlFor="precision" className="justify-self-end whitespace-nowrap">
                            精度：
                        </label>
                        <DialogSelect id="precision" value="0.00" width="w-16" />
                    </div>
                </div>
            </div>
        </form>
    );
}

function Callout() {
    return (
        <>
            <svg className="pointer-events-none absolute inset-0 h-full w-full" fill="none" aria-hidden="true">
                <g transform="translate(-81 -150)" stroke="#e60000">
                    <rect x="100" y="200" width="72" height="38" strokeWidth="4" />
                    <path d="M190 370l-46-121" strokeWidth="2" />
                    <path d="M139 234l12 13-11 5z" fill="#e60000" stroke="none" />
                </g>
            </svg>
            <p className="absolute top-[238px] left-[37px] text-[36px] leading-[50px] whitespace-nowrap text-[#f01010]">±0.00：%%P0.00</p>
        </>
    );
}

function Canvas() {
    return (
        <div className="flex min-h-0 flex-1">
            <div className="relative min-w-0 flex-1 overflow-hidden bg-black">
                <FloorPlan />
                <ViewCube />
                <span className="absolute top-[110px] right-[31px] flex h-[11px] w-8 items-center justify-between rounded-sm bg-[#7d7d8d] px-[3px] text-[8px] leading-[11px] text-[#ccc]">
                    WCS
                    <Svg w={5} h={4}>
                        <path d="M.5.5h4l-2 2.500z" stroke="#aaa" />
                    </Svg>
                </span>
                <NavigationBar />
                <Svg w={34} h={9} className="absolute top-[7px] right-[7px]">
                    <path d="M2 6h6" stroke="#fff" strokeWidth="2" />
                    <path d="M17 3V1.500h5v5h-1.500M15 3.500h4.500v4H15z" stroke="#fff" strokeWidth="1.200" />
                    <path d="M28 1.500l5 5M33 1.500l-5 5" stroke="#fff" strokeWidth="1.600" />
                </Svg>
                <ElevationDialog />
                <Callout />
            </div>
            <div className="flex w-[14px] shrink-0 flex-col items-center bg-[#f0f0f0] py-[6px]">
                <Chevron className="rotate-180" />
                <span className="mt-[58px] h-[15px] w-3 bg-[#cdcdcd]" />
                <span className="flex-1" />
                <Chevron />
            </div>
        </div>
    );
}

function LayoutTabs() {
    return (
        <div className="flex h-[13px] shrink-0 bg-[#f0f0f0] text-[10px] leading-[13px] text-[#222]">
            {['M3 3v6M9 3L5 6l4 3z', 'M8 3L4 6l4 3z', 'M4 3l4 3-4 3z', 'M9 3v6M3 3l4 3-4 3z'].map((d) => (
                <button key={d} type="button" aria-label="布局导航" className="border-r border-[#ccc]">
                    <Svg w={11} h={12}>
                        <path d={d} fill="#666" stroke="#666" />
                    </Svg>
                </button>
            ))}
            <button type="button" className="relative ml-[2px] w-10 text-white">
                <Svg w={40} h={13} className="absolute inset-0">
                    <path d="M0 0h40l-5 13H5z" fill="#000" stroke="none" />
                </Svg>
                <span className="relative">模型</span>
            </button>
            {['布局1', '布局2'].map((tab) => (
                <button key={tab} type="button" className="flex w-10 items-center justify-between pl-1">
                    {tab}
                    <Svg w={6} h={13}>
                        <path d="M5 1L1 12" />
                    </Svg>
                </button>
            ))}
            <span className="flex-1" />
            <div className="flex w-[322px] items-center justify-between border-l-4 border-[#ccc] pr-[19px] pl-1">
                <Chevron className="rotate-90" />
                <span className="flex items-center gap-1">
                    <span className="h-3 w-[14px] bg-[#cdcdcd]" />
                    <Chevron className="-rotate-90" />
                </span>
            </div>
        </div>
    );
}

function CommandLine() {
    return (
        <div className="flex h-[26px] shrink-0 border-t-4 border-[#6b6b6b] bg-white text-[13px] text-[#222] [font-family:'DejaVu_Sans_Mono','Noto_Sans_CJK_SC',monospace]">
            <div className="flex w-[46px] items-center gap-[7px] bg-linear-to-b from-[#5a5a5a] to-[#8a8a8a] pl-[3px]">
                <Svg w={5} h={14}>
                    <path d="M1 0v14M4 0v14" stroke="#bbb" strokeDasharray="1 2" />
                </Svg>
                <button type="button" aria-label="关闭命令行">
                    <Svg w={8} h={8}>
                        <path d="M1 1l6 6M7 1L1 7" stroke="#fff" strokeWidth="1.800" />
                    </Svg>
                </button>
                <button type="button" aria-label="自定义命令行" className="ml-px">
                    <Svg w={14} h={14}>
                        <path d="M5 5l7 7" stroke="#eee" strokeWidth="3" strokeLinecap="round" />
                        <path d="M2 3c0 4 3 5 5 3s1-4-1-5L6 4 4 5z" fill="#eee" stroke="none" />
                    </Svg>
                </button>
            </div>
            <div className="flex min-w-0 flex-1 items-center pl-1">
                <Svg w={14} h={12}>
                    <rect x=".5" y=".5" width="13" height="11" fill="#dfe2e8" stroke="#c5c8ce" />
                    <path d="M3 3l3 3-3 3M7 9.500h4" stroke="#555" />
                </Svg>
                <Svg w={5} h={3} className="mx-1">
                    <path d="M0 0h5L2.500 3z" fill="#888" stroke="none" />
                </Svg>
                <label htmlFor="command" className="flex items-center whitespace-nowrap">
                    <b className="mr-[6px] text-[12px]">TMELEV</b>
                    请点取标高点或
                    <span className="ml-[10px]">[</span>
                    <button type="button" className="rounded-[3px] bg-[#d4d4d8] leading-4">
                        参考标高(<b className="text-[#1414d8]">R</b>)
                    </button>
                    ]&lt;退出&gt;:
                </label>
                <input id="command" defaultValue="%%P" className="min-w-0 flex-1 font-bold outline-none" />
            </div>
        </div>
    );
}

/* ---------- status bar ---------- */

const toggles: { label: string; d: string; on?: boolean }[] = [
    { label: '推断约束', d: 'M7 1v10M2 6h7M10 5l2 3-2 3' },
    { label: '捕捉模式', d: 'M3 2.500h9M3 5.500h9M3 8.500h9M12.500 2v8' },
    { label: '栅格显示', d: 'M2.500 1.500h10v10h-10zM5 1v10M7.500 1v10M10 1v10M2 4h10M2 6.500h10M2 9h10' },
    { label: '正交模式', d: 'M2.500 2v8.500h10M5 8v2', on: true },
    { label: '极轴追踪', d: 'M11 6a3.500 3.500 0 1 1-3-3M7 7l6-4M6 6h3' },
    { label: '对象捕捉', d: 'M3.500 3.500h9v8h-9zM2 2h3v3H2z', on: true },
    { label: '三维对象捕捉', d: 'M2.500 4.500h7v7h-7zM5 4l2-2.500h6v7L10 11' },
    { label: '对象捕捉追踪', d: 'M11 2L3 10h9' },
    { label: '动态UCS', d: 'M2.500 1v10h10M3 10l8-7M9 2l3 3' },
    { label: '动态输入', d: 'M7 2v7M3 6h9M9 9h4', on: true },
    { label: '线宽', d: 'M7 2v9M2 6.500h10', on: true },
    { label: '透明度', d: 'M2.500 2.500h10v8h-10zM4 4l7 6M8 3l4 4M3 7l4 3', on: true },
    { label: '快捷特性', d: 'M4.500 3.500h6v6h-6zM7.500 3v6' },
    { label: '选择循环', d: 'M4 1v8M1 4h8M7.500 6.500h5v5h-5z' },
    { label: '注释监视器', d: 'M5.500 1.500h3v3h3v3h-3v3h-3v-3h-3v-3h3z' },
];

function StatusText({ children, on }: { children: ReactNode; on?: boolean }) {
    return (
        <button type="button" className={clsx('border-r border-[#777] px-[2px]', on ? 'bg-[#a9d9e6]' : 'bg-[#b4b4b4]')}>
            {children}
        </button>
    );
}

function StatusIcon({ children }: { children: ReactNode }) {
    return (
        <span className="flex w-[15px] items-center justify-center border-r border-[#777] bg-[#a9a9a9]">
            <Svg w={13} h={13}>
                {children}
            </Svg>
        </span>
    );
}

function StatusBar() {
    return (
        <footer className="flex h-[17px] shrink-0 items-stretch bg-linear-to-b from-[#808080] to-[#9a9a9a] pt-[2px] text-[10px] leading-[15px] whitespace-nowrap text-[#111]">
            <button type="button" className="flex w-[73px] items-center gap-[5px] bg-[#a6a6a6] pl-1 [font-family:'Liberation_Mono','Noto_Sans_CJK_SC',monospace]">
                <span>比例 1:100</span>
                <Caret small />
            </button>
            <span className="w-[98px] pl-1 text-[11px] whitespace-pre [font-family:'Liberation_Serif',serif]">{'51092,  34252,  0'}</span>
            {toggles.map(({ label, d, on }) => (
                <button
                    key={label}
                    type="button"
                    aria-label={label}
                    className={clsx('border-r border-[#777]', on ? 'bg-[#a9dcea]' : 'bg-[#bdbdbd]')}
                >
                    <Svg w={14} h={13}>
                        <path d={d} stroke="#444" />
                    </Svg>
                </button>
            ))}
            <span className="flex-1" />
            <StatusText>模型</StatusText>
            <StatusIcon>
                <path d="M1.500 1.500h10v9h-10zM3 8l4-4v4z" fill="#eee" />
            </StatusIcon>
            <StatusIcon>
                <path d="M.5 2.500h5v5h-5zM6.500 2.500h5v5h-5zM0 10.500h12" fill="#eee" />
            </StatusIcon>
            <span className="w-[15px] bg-[#777]" />
            <span className="flex items-center gap-[2px] bg-[#adadad] px-[2px]">
                <Svg w={11} h={13}>
                    <path d="M5.500 1v6M5.500 5L1 11M5.500 5l5 6M3 8h5" stroke="#eee" strokeWidth="1.800" />
                </Svg>
                <span className="text-[11px]">1:1</span>
                <Caret small />
            </span>
            <StatusIcon>
                <path d="M5.500 1v5L1 11M5.500 6l4 5" stroke="#eee" strokeWidth="1.500" />
                <path d="M9 4v6M6 7h6" stroke="#f0b030" strokeWidth="1.500" />
            </StatusIcon>
            <StatusIcon>
                <path d="M4 1v5L1 11M4 6l4 5M9 1v5l-2 5M9 6l3 5" stroke="#ccc" />
            </StatusIcon>
            <span className="w-1 bg-[#777]" />
            <StatusIcon>
                <circle cx="6.500" cy="6.500" r="5" fill="#eee" strokeDasharray="2 1" strokeWidth="2" />
                <circle cx="6.500" cy="6.500" r="2" fill="#fff" />
            </StatusIcon>
            <StatusIcon>
                <path d="M7.500 6V3a2 2 0 0 1 4 0v2M2.500 6.500h6v5h-6z" fill="#eee" />
            </StatusIcon>
            <StatusIcon>
                <circle cx="6.500" cy="6" r="4" fill="#666" />
                <path d="M4 5l2-2h2l-1 3z" fill="#ccc" stroke="none" />
            </StatusIcon>
            <StatusText on>编组</StatusText>
            <StatusText>基线</StatusText>
            <StatusText>填充</StatusText>
            <StatusText on>加粗</StatusText>
            <StatusText>动态标注</StatusText>
            <span className="mr-[2px] ml-1 flex w-[22px] items-center justify-center border border-[#666] bg-[#999]">
                <Svg w={10} h={12}>
                    <path d="M3 7C1 5 2 1 5 1s4 4 2 6v2H3z" fill="#fdeaa0" stroke="#a89040" />
                    <path d="M3.500 10.500h3" stroke="#eee" strokeWidth="2" />
                </Svg>
            </span>
            <span className="flex items-center gap-1 pr-px">
                <Caret small />
                <Svg w={12} h={12}>
                    <path d="M1.500 1.500h9v8h-9z" fill="#fff" />
                    <path d="M1 2h10" strokeWidth="2" />
                </Svg>
                <Svg w={8} h={12}>
                    <path d="M7 3v8M4 6v5M1 9v2" stroke="#ddd" strokeDasharray="1 2" />
                </Svg>
            </span>
        </footer>
    );
}

function Watermark() {
    return (
        <div className="pointer-events-none absolute right-[50px] bottom-0">
            <svg
                width="182"
                height="90"
                viewBox="0 0 182 90"
                fill="#cdcdcd"
                aria-hidden="true"
                className="[font-family:'Liberation_Sans','Noto_Sans_CJK_SC',sans-serif]"
            >
                <text x="0" y="54" fontSize="37" fontWeight="700">
                    Bai
                </text>
                <ellipse cx="68" cy="22" rx="6.500" ry="8.500" transform="rotate(-10 68 22)" />
                <ellipse cx="81" cy="9" rx="6.500" ry="8.500" />
                <ellipse cx="97" cy="10" rx="6.500" ry="8.500" transform="rotate(10 97 10)" />
                <ellipse cx="107" cy="26" rx="6.500" ry="8.500" transform="rotate(10 107 26)" />
                <path d="M88 23c8 0 10 8 16 14s7 10 4 15c-4 7-12 4-20 4s-16 3-20-4c-3-5-1-10 4-15s8-14 16-14z" />
                <text x="88" y="50" fontSize="24" fontWeight="700" fill="#111" textAnchor="middle">
                    du
                </text>
                <text x="115" y="53" fontSize="30" fontWeight="700">
                    经验
                </text>
                <text x="1" y="79" fontSize="21" fill="#fff" stroke="#cfcfcf" strokeWidth=".7">
                    jingyan.baidu.com
                </text>
            </svg>
        </div>
    );
}

export default function App() {
    return (
        <div className="flex h-screen flex-col overflow-hidden bg-[#6b6b6b] [font-family:'Open_Sans','Noto_Sans_CJK_SC',sans-serif]">
            <Header />
            <Ribbon />
            <DocumentTabs />
            <main className="flex min-h-0 flex-1 gap-1">
                <SideMenu />
                <div className="relative flex min-w-0 flex-1 flex-col">
                    <Canvas />
                    <LayoutTabs />
                    <CommandLine />
                    <Watermark />
                </div>
            </main>
            <StatusBar />
        </div>
    );
}
